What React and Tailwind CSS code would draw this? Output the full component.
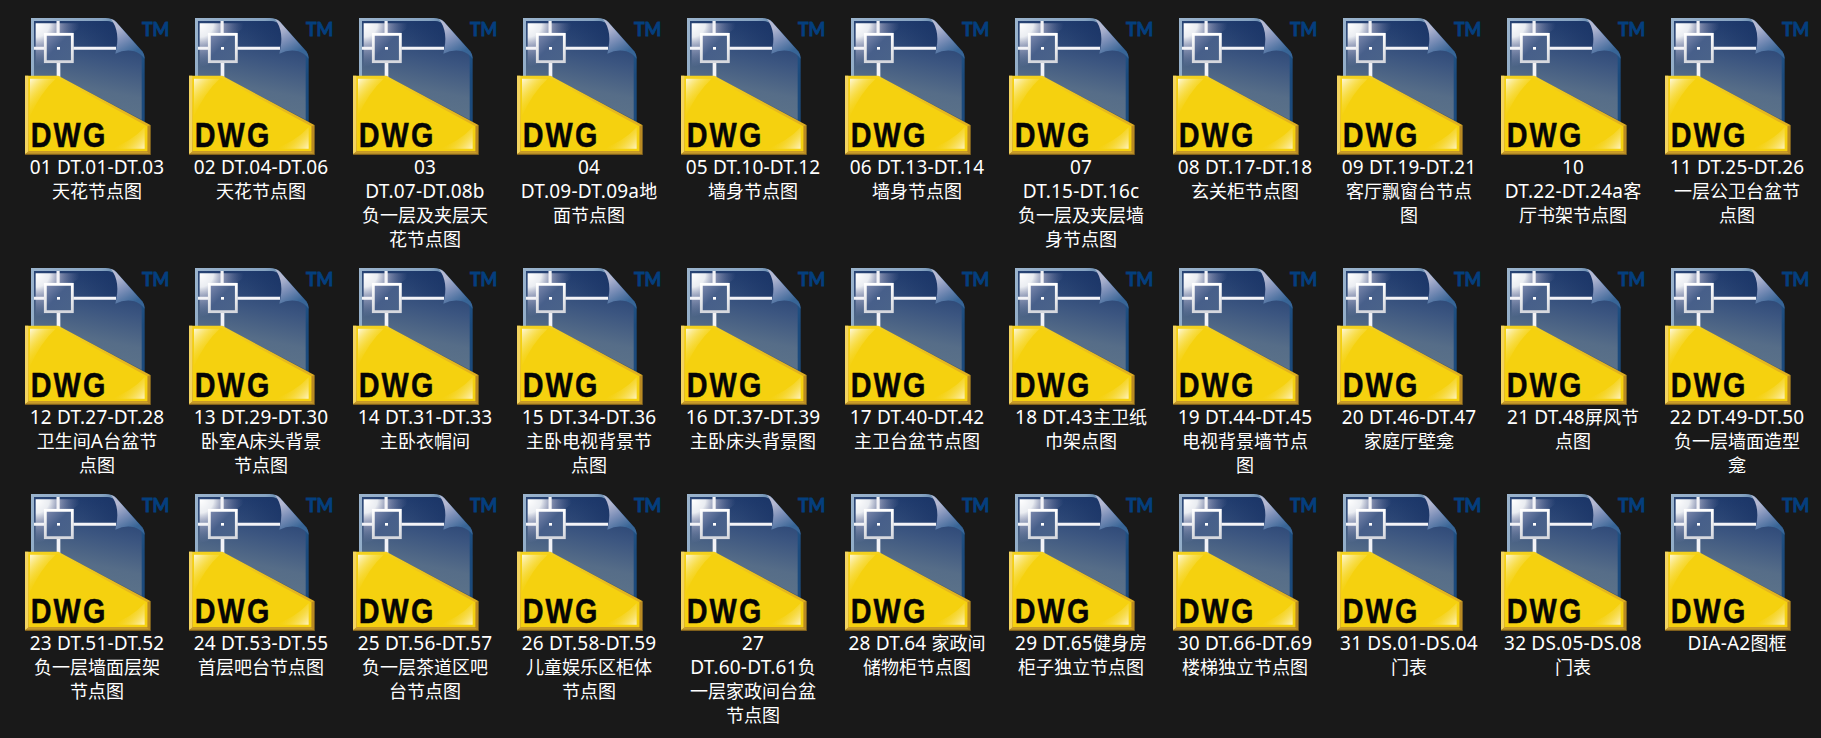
import React from 'react';

// one array per row, each file name is split at its line breaks
const ROWS = [
  [
    ['01 DT.01-DT.03', '天花节点图'],
    ['02 DT.04-DT.06', '天花节点图'],
    ['03', 'DT.07-DT.08b', '负一层及夹层天', '花节点图'],
    ['04', 'DT.09-DT.09a地', '面节点图'],
    ['05 DT.10-DT.12', '墙身节点图'],
    ['06 DT.13-DT.14', '墙身节点图'],
    ['07', 'DT.15-DT.16c', '负一层及夹层墙', '身节点图'],
    ['08 DT.17-DT.18', '玄关柜节点图'],
    ['09 DT.19-DT.21', '客厅飘窗台节点', '图'],
    ['10', 'DT.22-DT.24a客', '厅书架节点图'],
    ['11 DT.25-DT.26', '一层公卫台盆节', '点图'],
  ],
  [
    ['12 DT.27-DT.28', '卫生间A台盆节', '点图'],
    ['13 DT.29-DT.30', '卧室A床头背景', '节点图'],
    ['14 DT.31-DT.33', '主卧衣帽间'],
    ['15 DT.34-DT.36', '主卧电视背景节', '点图'],
    ['16 DT.37-DT.39', '主卧床头背景图'],
    ['17 DT.40-DT.42', '主卫台盆节点图'],
    ['18 DT.43主卫纸', '巾架点图'],
    ['19 DT.44-DT.45', '电视背景墙节点', '图'],
    ['20 DT.46-DT.47', '家庭厅壁龛'],
    ['21 DT.48屏风节', '点图'],
    ['22 DT.49-DT.50', '负一层墙面造型', '龛'],
  ],
  [
    ['23 DT.51-DT.52', '负一层墙面层架', '节点图'],
    ['24 DT.53-DT.55', '首层吧台节点图'],
    ['25 DT.56-DT.57', '负一层茶道区吧', '台节点图'],
    ['26 DT.58-DT.59', '儿童娱乐区柜体', '节点图'],
    ['27', 'DT.60-DT.61负', '一层家政间台盆', '节点图'],
    ['28 DT.64 家政间', '储物柜节点图'],
    ['29 DT.65健身房', '柜子独立节点图'],
    ['30 DT.66-DT.69', '楼梯独立节点图'],
    ['31 DS.01-DS.04', '门表'],
    ['32 DS.05-DS.08', '门表'],
    ['DIA-A2图框'],
  ],
];

const IconDefs = () => (
  <svg className="absolute h-0 w-0" aria-hidden="true">
    <defs>
      <linearGradient id="page" x1="0.6" y1="0" x2="0.4" y2="1">
        <stop offset="0" stopColor="#1f3b6e" />
        <stop offset="0.35" stopColor="#3b5580" />
        <stop offset="0.65" stopColor="#566d88" />
        <stop offset="1" stopColor="#5e758a" />
      </linearGradient>
      <linearGradient id="pageEdge" x1="0" y1="0" x2="1" y2="0.5">
        <stop offset="0" stopColor="#9bb4cd" />
        <stop offset="0.5" stopColor="#86a3c1" />
        <stop offset="0.8" stopColor="#285a8c" />
        <stop offset="1" stopColor="#1b4a7c" />
      </linearGradient>
      <radialGradient id="pageShine" gradientUnits="userSpaceOnUse" cx="64" cy="42" r="130">
        <stop offset="0" stopColor="#fff" />
        <stop offset="0.3" stopColor="#fff" stopOpacity="0.9" />
        <stop offset="0.6" stopColor="#cfcbe0" stopOpacity="0.45" />
        <stop offset="1" stopColor="#8d92b8" stopOpacity="0" />
      </radialGradient>
      <linearGradient id="topBand" x1="0" y1="0" x2="1" y2="0">
        <stop offset="0" stopColor="#1b3568" stopOpacity="0" />
        <stop offset="0.6" stopColor="#1a3466" stopOpacity="0.3" />
        <stop offset="1" stopColor="#1a3466" stopOpacity="0.75" />
      </linearGradient>
      <linearGradient id="fold" gradientUnits="userSpaceOnUse" x1="304" y1="56" x2="346" y2="132">
        <stop offset="0" stopColor="#b4b8d2" />
        <stop offset="0.45" stopColor="#7c8fb8" />
        <stop offset="1" stopColor="#386596" />
      </linearGradient>
      <linearGradient id="box" x1="0" y1="0" x2="1" y2="1">
        <stop offset="0" stopColor="#7f8bb0" />
        <stop offset="0.45" stopColor="#475f8a" />
        <stop offset="1" stopColor="#4a6389" />
      </linearGradient>
      <linearGradient id="cross" x1="0" y1="0" x2="0" y2="1">
        <stop offset="0" stopColor="#fff" />
        <stop offset="1" stopColor="#d6d8de" />
      </linearGradient>
      <linearGradient id="shineTop" gradientUnits="userSpaceOnUse" x1="44" y1="204" x2="100" y2="256">
        <stop offset="0" stopColor="#fffbe6" />
        <stop offset="1" stopColor="#f8dc3c" stopOpacity="0.1" />
      </linearGradient>
      <linearGradient id="shineBottom" gradientUnits="userSpaceOnUse" x1="392" y1="418" x2="340" y2="368">
        <stop offset="0" stopColor="#fff6d0" />
        <stop offset="1" stopColor="#f5d637" stopOpacity="0" />
      </linearGradient>
      <linearGradient id="rim" x1="0" y1="0" x2="0" y2="1">
        <stop offset="0" stopColor="#f5d21e" />
        <stop offset="0.6" stopColor="#e0b020" />
        <stop offset="1" stopColor="#c08e22" />
      </linearGradient>
    </defs>
  </svg>
);

const DwgIcon = () => (
  <svg viewBox="0 0 492 435" className="block h-[145px] w-[164px]">
    {/* page */}
    <path d="M48 24H272Q292 24 303 35L382 124Q389 133 389 144V350L48 210Z" fill="url(#pageEdge)" />
    <path d="M57 33H276Q290 33 302 44L374 128Q380 136 380 146V340L57 206Z" fill="url(#page)" />
    <path d="M57 33H276Q296 33 305 52Q310 84 303 112H57Z" fill="url(#topBand)" />
    <path d="M62 40H206Q190 62 154 78Q100 112 88 165L62 172Z" fill="url(#pageShine)" />
    <path d="M288 27Q297 30 303 36L382 125Q389 134 389 146Q376 130 358 124Q330 117 301 131Q318 66 288 27Z" fill="url(#fold)" />
    {/* crosshair */}
    <path d="M124.5 33h9.5v38h-9.5zM57 110.5h31v8.5H57zM175 110.5h128v8.5H175zM125 158h11v45h-11z" fill="#f3f3f7" />
    <rect x="91" y="73" width="81" height="82" fill="url(#box)" stroke="url(#cross)" strokeWidth="8.5" />
    <rect x="126" y="111" width="9" height="8" fill="#fff" />
    {/* folder band */}
    <path d="M130 198L389 334L389 341L130 208Z" fill="#2c3f55" opacity="0.55" />
    <path d="M30 197H130L406 345V434H30Z" fill="url(#rim)" />
    <path d="M30 197H40V424L30 434Z" fill="#f3d460" />
    <path d="M30 434L40 424H397L406 434Z" fill="#c99c28" />
    <path d="M30 431H406V435H30Z" fill="#80601c" />
    <path d="M397 349L406 345V434L397 424Z" fill="#b98a22" />
    <path d="M41 204H128L397 349V423H41Z" fill="#f5d10f" />
    <path d="M45 206H122Q78 246 45 318Z" fill="url(#shineTop)" />
    <path d="M389 352V416H288Q350 394 389 352Z" fill="url(#shineBottom)" />
    <text
      transform="translate(47 411) scale(0.8 1)"
      className="font-['Liberation_Sans',sans-serif] text-[108px] font-bold tracking-[8px]"
      fill="#050505"
      stroke="#050505"
      strokeWidth="1.5"
    >
      DWG
    </text>
    <text
      x="381"
      y="77"
      textLength="82"
      lengthAdjust="spacingAndGlyphs"
      className="font-[Lato,sans-serif] text-[55px] font-bold"
      fill="#043f7e"
      stroke="#043f7e"
      strokeWidth="2.5"
    >
      TM
    </text>
  </svg>
);

// latin runs are set slightly larger than the chinese ones
const NameLine = ({ text }) => (
  <div className="h-6 whitespace-nowrap">
    {text.split(/([\x20-\x7e]+)/).filter(Boolean).map((part, i) => (
      <span key={i} className={/[\x20-\x7e]/.test(part) ? 'text-[19px] leading-6 tracking-[0.2px]' : ''}>
        {part}
      </span>
    ))}
  </div>
);

const FileItem = ({ lines }) => (
  <div className="w-[164px]">
    <DwgIcon />
    <div className="text-center text-[18px] leading-6 text-white">
      {lines.map((line, i) => (
        <NameLine key={i} text={line} />
      ))}
    </div>
  </div>
);

const App = () => (
  <div className="h-[738px] w-full overflow-hidden bg-[#191919] pt-2.5 pl-[15px] font-['Noto_Sans','Noto_Sans_CJK_SC',sans-serif]">
    <IconDefs />
    <div className="flex flex-col gap-[9px]">
      {ROWS.map((row, i) => (
        <div key={i} className="flex">
          {row.map((lines) => (
            <FileItem key={lines[0]} lines={lines} />
          ))}
        </div>
      ))}
    </div>
  </div>
);

export default App;
